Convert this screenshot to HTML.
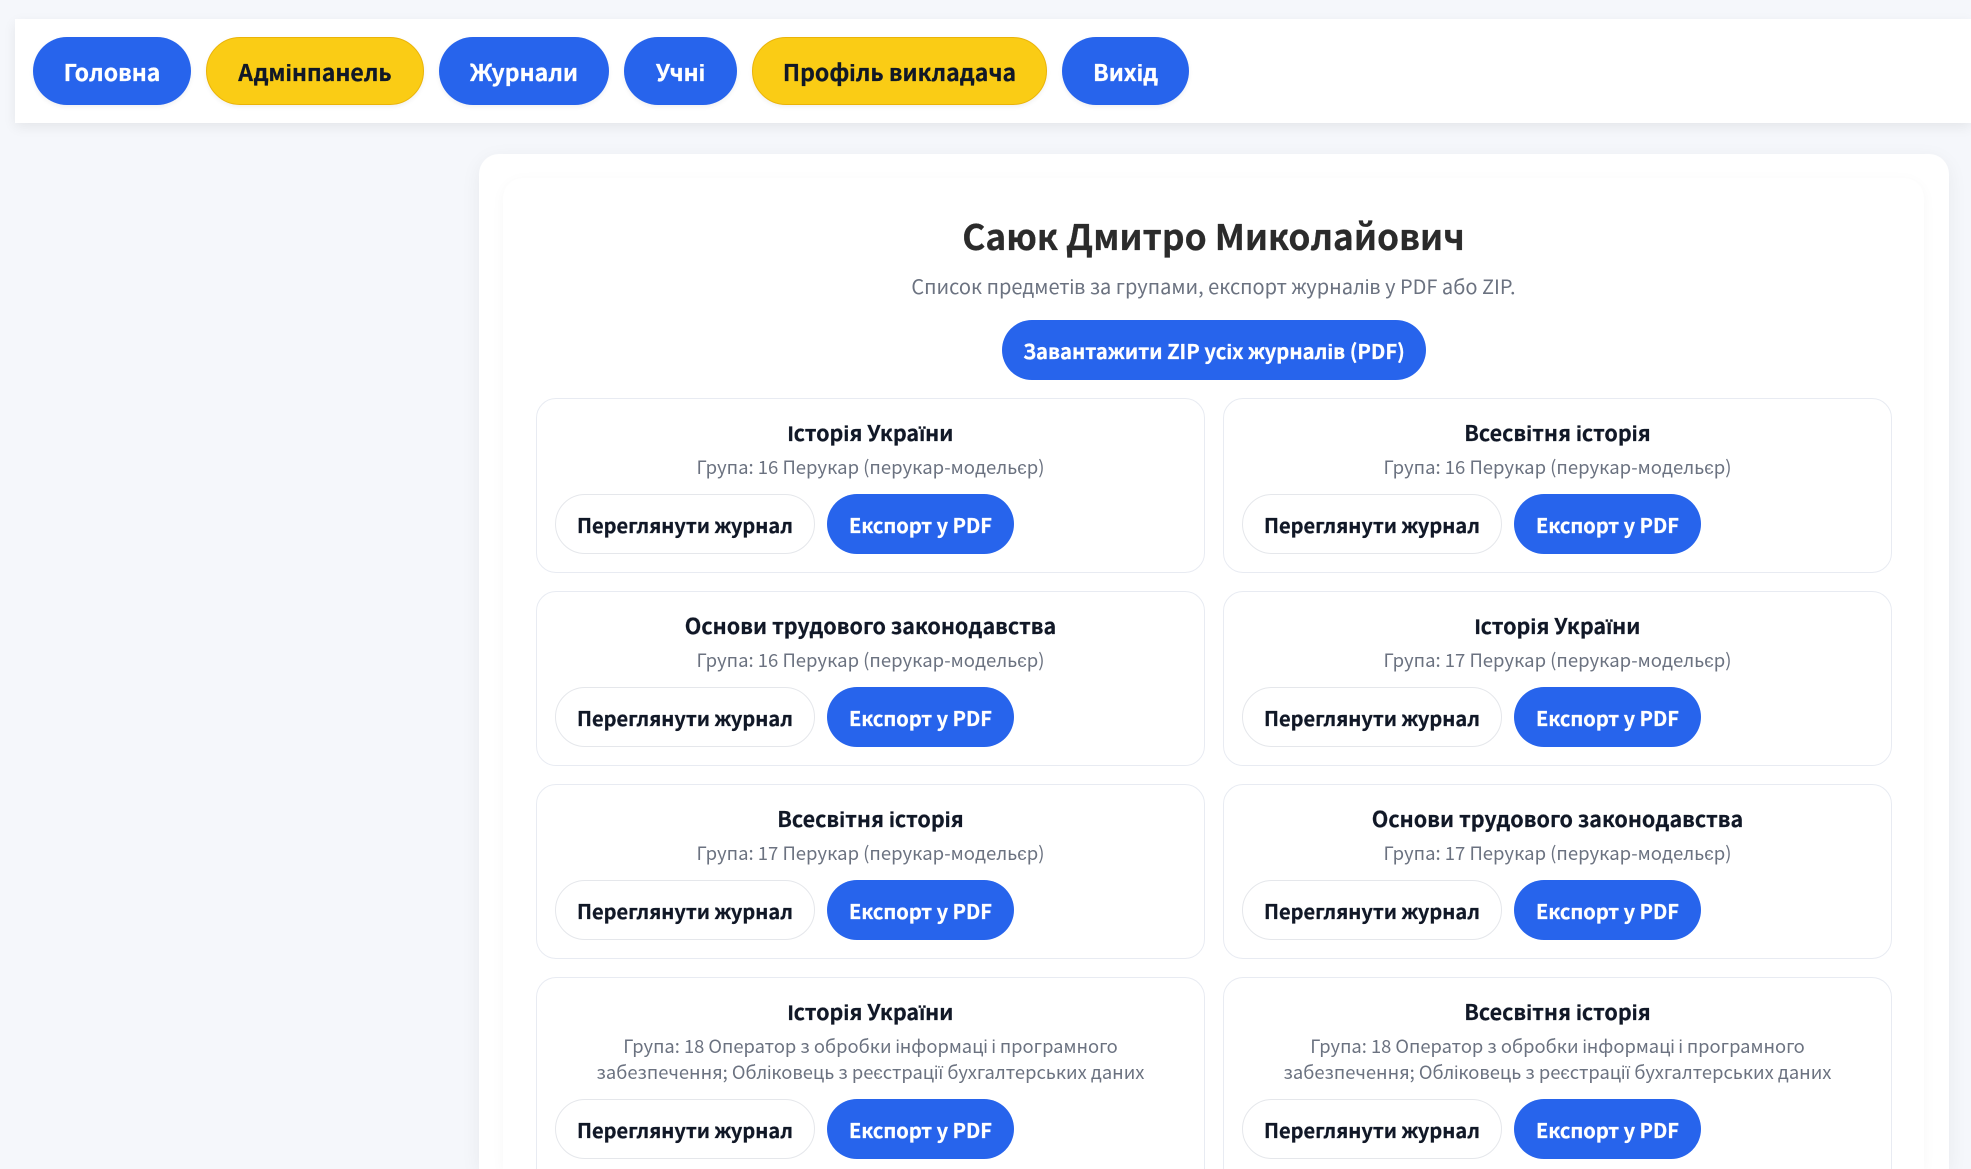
<!DOCTYPE html>
<html lang="uk"><head><meta charset="utf-8"><title>Профіль викладача</title>
<style>
*{box-sizing:border-box;margin:0;padding:0}
html,body{width:1971px;height:1169px;overflow:hidden;background:#f5f7fb}
body{position:relative;font-family:"Noto Sans CJK SC","Liberation Sans",sans-serif}
.nav{position:absolute;left:15px;top:19px;width:1956px;height:104px;background:#fff;box-shadow:0 4px 12px rgba(0,0,0,.07)}
.b{position:absolute;display:flex;align-items:center;justify-content:center;white-space:nowrap;border-radius:34px;font-weight:700;-webkit-text-stroke:.25px currentColor}
.n{top:37px;height:68px;font-size:23px;background:#2764ec;color:#fff;box-shadow:0 2px 5px rgba(0,0,0,.06)}
.y{background:#facc15;color:#111827;border:1px solid #eab308}
.outer{position:absolute;left:479px;top:154px;width:1470px;height:1015px;background:#fff;border-radius:20px 20px 0 0;box-shadow:0 5px 20px rgba(0,0,0,.06)}
.inner{position:absolute;left:503px;top:178px;width:1421px;height:991px;background:#fff;border-radius:20px 20px 0 0;box-shadow:0 3px 14px rgba(0,0,0,.035)}
.t{position:absolute;text-align:center;white-space:nowrap}
h1{position:absolute;left:503px;width:1421px;top:211px;line-height:50px;font-size:35.3px;text-align:center;color:#2b2b2b;font-weight:700;-webkit-text-stroke:.25px currentColor}
.sub{left:503px;width:1421px;top:272px;line-height:28px;font-size:20px;color:#6b7280}
.zip{left:1002px;top:320px;width:424px;height:60px;background:#2764ec;color:#fff;font-size:20.25px;border-radius:30px}
.c{position:absolute;width:669px;height:175px;background:#fff;border:1px solid #e8ebf2;border-radius:20px}
.tall{height:192px;border-bottom:0;border-radius:20px 20px 0 0}
.c h3{position:absolute;left:0;right:0;top:19px;line-height:30px;font-size:21.5px;font-weight:700;text-align:center;color:#111827;-webkit-text-stroke:.2px currentColor}
.c p{position:absolute;left:0;right:0;top:55px;line-height:26px;font-size:18.5px;text-align:center;color:#6b7280;white-space:nowrap}
.tall p{font-size:18.35px}
.v,.e{top:95px;height:60px;font-size:20px;border-radius:30px}
.v{left:18px;width:260px;background:#fff;border:1px solid #e5e7eb;color:#111827}
.e{left:290px;width:187px;background:#2764ec;color:#fff}
.tall .v,.tall .e{top:121px}
</style></head><body>
<div class="nav"></div>
<a class="b n" style="left:33px;width:158px">Головна</a>
<a class="b n y" style="left:206px;width:218px">Адмінпанель</a>
<a class="b n" style="left:439px;width:170px">Журнали</a>
<a class="b n" style="left:624px;width:113px">Учні</a>
<a class="b n y" style="left:752px;width:295px">Профіль викладача</a>
<a class="b n" style="left:1062px;width:127px">Вихід</a>
<div class="outer"></div>
<div class="inner"></div>
<h1>Саюк Дмитро Миколайович</h1>
<div class="t sub">Список предметів за групами, експорт журналів у PDF або ZIP.</div>
<a class="b zip">Завантажити ZIP усіх журналів (PDF)</a>

<div class="c" style="left:536px;top:398px"><h3>Історія України</h3><p>Група: 16 Перукар (перукар-модельєр)</p><a class="b v">Переглянути журнал</a><a class="b e">Експорт у PDF</a></div>
<div class="c" style="left:1223px;top:398px"><h3>Всесвітня історія</h3><p>Група: 16 Перукар (перукар-модельєр)</p><a class="b v">Переглянути журнал</a><a class="b e">Експорт у PDF</a></div>
<div class="c" style="left:536px;top:591px"><h3>Основи трудового законодавства</h3><p>Група: 16 Перукар (перукар-модельєр)</p><a class="b v">Переглянути журнал</a><a class="b e">Експорт у PDF</a></div>
<div class="c" style="left:1223px;top:591px"><h3>Історія України</h3><p>Група: 17 Перукар (перукар-модельєр)</p><a class="b v">Переглянути журнал</a><a class="b e">Експорт у PDF</a></div>
<div class="c" style="left:536px;top:784px"><h3>Всесвітня історія</h3><p>Група: 17 Перукар (перукар-модельєр)</p><a class="b v">Переглянути журнал</a><a class="b e">Експорт у PDF</a></div>
<div class="c" style="left:1223px;top:784px"><h3>Основи трудового законодавства</h3><p>Група: 17 Перукар (перукар-модельєр)</p><a class="b v">Переглянути журнал</a><a class="b e">Експорт у PDF</a></div>
<div class="c tall" style="left:536px;top:977px"><h3>Історія України</h3><p>Група: 18 Оператор з обробки інформаці і програмного<br>забезпечення; Обліковець з реєстрації бухгалтерських даних</p><a class="b v">Переглянути журнал</a><a class="b e">Експорт у PDF</a></div>
<div class="c tall" style="left:1223px;top:977px"><h3>Всесвітня історія</h3><p>Група: 18 Оператор з обробки інформаці і програмного<br>забезпечення; Обліковець з реєстрації бухгалтерських даних</p><a class="b v">Переглянути журнал</a><a class="b e">Експорт у PDF</a></div>
</body></html>
